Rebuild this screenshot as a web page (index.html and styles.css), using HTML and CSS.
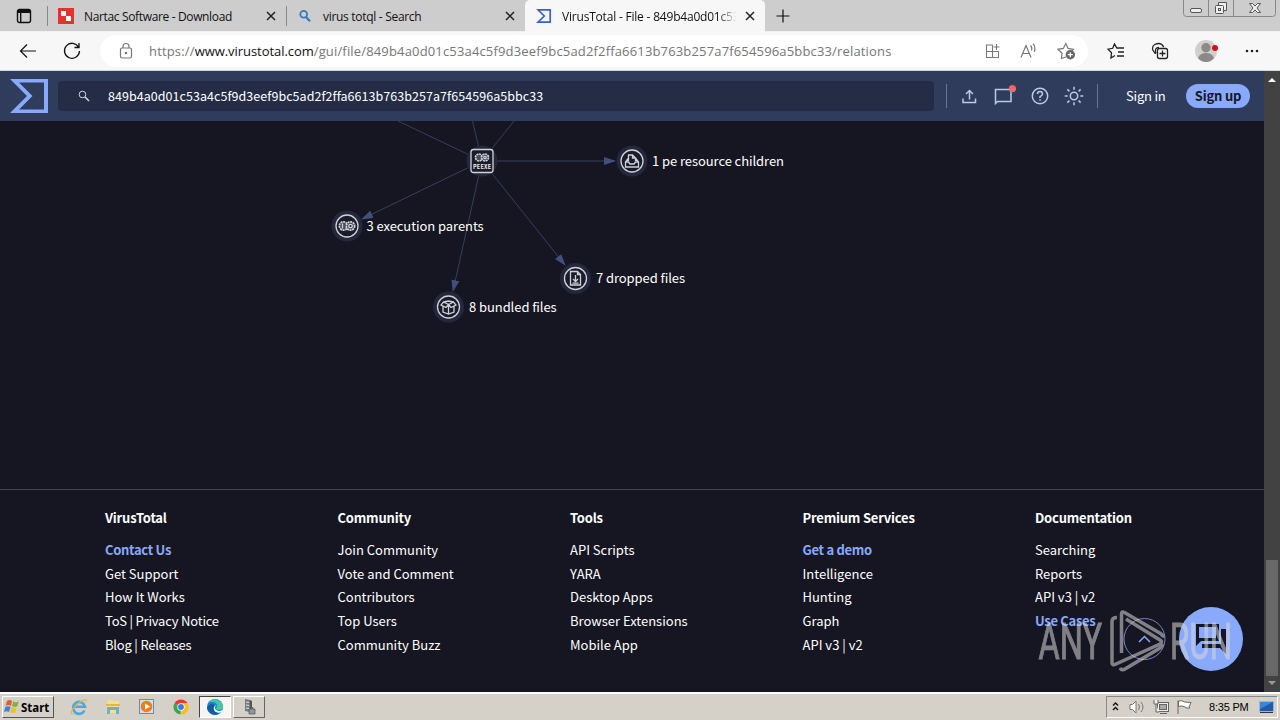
FILE: index.html
```html
<!DOCTYPE html>
<html lang="en">
<head>
    <meta charset="UTF-8">
    <meta name="viewport" content="width=device-width, initial-scale=1.0">
    <title>VirusTotal - File</title>
    <link rel="stylesheet" href="styles.css">
</head>
<body>
    <!-- Browser tabs -->
    <div class="tabs">
        <div class="tab-actions">
            <svg width="16" height="16" viewBox="0 0 16 16" fill="none" stroke="#111" stroke-width="1.4"><rect x="1.5" y="1.5" width="13" height="13" rx="2"/><path d="M1.5 3.5h13" stroke-width="3"/><path d="M4.7 4v10"/></svg>
        </div>
        <div class="tab tab-first">
            <svg class="favicon" width="16" height="16" viewBox="0 0 16 16"><path fill="#e5322d" d="M0 0h16v16H0z"/><path fill="#fff" d="M3 3h5v5H3zM8 8h5v5H8z"/></svg>
            <span class="tab-title">Nartac Software - Download</span>
            <svg class="close" width="10" height="10" viewBox="0 0 10 10"><path d="M1 1l8 8M9 1L1 9"/></svg>
        </div>
        <div class="tab tab-search">
            <svg class="favicon" width="16" height="16" viewBox="0 0 16 16" fill="none" stroke="#3478c4" stroke-width="1.8"><circle cx="6.7" cy="6.3" r="3.4"/><path d="M9 9l4 4.3" stroke-width="2.2"/></svg>
            <span class="tab-title">virus totql - Search</span>
            <svg class="close" width="10" height="10" viewBox="0 0 10 10"><path d="M1 1l8 8M9 1L1 9"/></svg>
        </div>
        <div class="tab tab-active">
            <svg class="favicon" width="16" height="16" viewBox="0 0 16 16"><path fill="none" stroke="#3b61c9" stroke-width="1.7" d="M2 1.8h12.2v12.4H2L8.3 8z"/></svg>
            <span class="tab-title tab-fade">VirusTotal - File - 849b4a0d01c53</span>
            <svg class="close" width="10" height="10" viewBox="0 0 10 10"><path d="M1 1l8 8M9 1L1 9"/></svg>
        </div>
        <svg class="new-tab" width="14" height="14" viewBox="0 0 14 14"><path d="M7 .5v13M.5 7h13" stroke="#111" stroke-width="1.2"/></svg>
        <svg class="window-buttons" width="94" height="18" viewBox="0 0 94 18" fill="none" stroke="#555">
            <path d="M.5 0v13.5q0 3 3 3h86q3 0 3-3V0M25.5 0v16M50.500 0v16" stroke="#888"/>
            <rect x="7.500" y="8.500" width="11" height="4" rx="1.500" fill="#eee"/>
            <path d="M35.500 5.500v-3h8v8h-3" fill="#eee"/><rect x="32.500" y="5.500" width="8" height="8" rx="1" fill="#eee"/><rect x="35.500" y="8.500" width="2" height="2"/>
            <path fill="#eee" d="M66.500 3.500h3l2.500 2.500 2.500-2.500h3L74 8l3.500 4.500h-3L72 10l-2.500 2.500h-3L70 8z"/>
        </svg>
    </div>

    <!-- Address bar -->
    <div class="toolbar">
        <svg class="back" width="18" height="16" viewBox="0 0 18 16" fill="none" stroke="#111" stroke-width="1.2"><path d="M17 8H1.500M8 1.500L1.500 8 8 14.500"/></svg>
        <svg class="reload" width="18" height="18" viewBox="0 0 18 18" fill="none" stroke="#111" stroke-width="1.3"><path d="M15.500 5A7.500 7.500 0 1 0 16.500 9M16 1v4.500h-4.500"/></svg>
        <div class="address">
            <svg class="lock" width="14" height="18" viewBox="0 0 14 18" fill="none" stroke="#777" stroke-width="1.200"><rect x="1.500" y="6" width="11" height="10" rx="1.500"/><path d="M4 6V4.500a3 3 0 0 1 6 0V6"/><circle cx="7" cy="11" r=".7" fill="#777"/></svg>
            <span class="url"><span class="scheme">https://</span><span class="host">www.virustotal.com</span><span class="path">/gui/file/849b4a0d01c53a4c5f9d3eef9bc5ad2f2ffa6613b763b257a7f654596a5bbc33/relations</span></span>
            <div class="address-icons">
                <svg width="16" height="16" viewBox="0 0 16 16" fill="none" stroke="#777" stroke-width="1.100"><path d="M7.500 2H1.500v12.500h12V8.500h-12M7.500 2v12.500M11.500 1v6M8.500 4h6"/></svg>
                <svg width="18" height="16" viewBox="0 0 18 16" fill="none" stroke="#777" stroke-width="1.200"><path d="M1 14.500L6 2.500l5 12M2.700 10.500h6.600M10.500 2.500q2 2 1 5M13 .7q3 3.500 1.300 8"/></svg>
                <svg width="18" height="18" viewBox="0 0 18 18"><path fill="none" stroke="#777" stroke-width="1.200" d="M9 15l-4.600 1.500.7-5.300L1 7.300l5.300-.9L8.800 1.500l2.400 4.900 5.300.9-2 2"/><circle cx="13.300" cy="12.700" r="4.700" fill="#666"/><path stroke="#fff" stroke-width="1.200" d="M10.800 12.700h5M13.300 10.200v5"/></svg>
            </div>
        </div>
        <div class="toolbar-icons">
            <svg width="18" height="18" viewBox="0 0 18 18" fill="none" stroke="#222" stroke-width="1.300"><path d="M8 13.500L4 16l.5-5.200L1 7.200l4.700-.9L7.500 2l2.300 4H17M11 10h6M10 14h7"/></svg>
            <svg width="18" height="18" viewBox="0 0 18 18" fill="none" stroke="#222" stroke-width="1.300"><path d="M4.500 12L1.800 8q-1-4 2-5.500 4-2 7 0l2 2.500"/><path d="M5 11.500Q3 5.500 8 5.500"/><rect x="6.500" y="6.500" width="10" height="10" rx="2"/><path d="M11.500 8.500v6M8.500 11.500h6"/></svg>
            <svg width="24" height="24" viewBox="0 0 24 24"><circle cx="11" cy="12" r="11" fill="#d2cecb"/><circle cx="11" cy="8.800" r="4.700" fill="#8b8a89"/><path fill="#8b8a89" d="M3 19q2-5 8-5t8 5q-3 4-8 4t-8-4z"/><circle cx="20" cy="9" r="3" fill="#d5111d"/></svg>
            <svg width="16" height="4" viewBox="0 0 16 4" fill="#222"><circle cx="2" cy="2" r="1.300"/><circle cx="7" cy="2" r="1.300"/><circle cx="12" cy="2" r="1.300"/></svg>
        </div>
    </div>

    <div class="viewport">
        <div class="page">
            <!-- Search header -->
            <header class="header">
                <svg class="logo" width="38" height="34" viewBox="0 0 38 34"><path fill="#88a9fc" fill-rule="evenodd" d="M17 17L0 34h38V0H0zM34 30.500H9L22.500 17 9 3.500h25z"/></svg>
                <div class="search">
                    <svg width="12" height="12" viewBox="0 0 12 12" fill="none" stroke="#ced5e5"><circle cx="4.500" cy="4.500" r="3.300"/><path d="M7 7l4 4" stroke-width="1.600"/></svg>
                    <span>849b4a0d01c53a4c5f9d3eef9bc5ad2f2ffa6613b763b257a7f654596a5bbc33</span>
                </div>
                <div class="header-icons">
                    <svg width="16" height="16" viewBox="0 0 16 16"><path d="M2 10.500v4h12.500v-4M8.500 11.500V2.500M5 6l3.500-3.500L12 6"/></svg>
                    <svg width="24" height="22" viewBox="0 0 24 22"><path d="M3.500 18.500V4.500h15.500v12H5.500z"/><circle class="badge" cx="20.500" cy="3.700" r="3.600"/></svg>
                    <svg width="18" height="18" viewBox="0 0 18 18"><circle cx="9" cy="9" r="7.700"/><path d="M6.500 7q0-2.500 2.500-2.500T11.500 7Q11.500 8.300 9 9.700v1.300M9 12.300v1.500"/></svg>
                    <svg width="20" height="20" viewBox="0 0 20 20"><circle cx="10" cy="10" r="3.700"/><path d="M10 .7v3M10 16.300v3M.7 10h3M16.300 10h3M3.400 3.400l2 2M14.600 14.600l2 2M16.600 3.400l-2 2M5.400 14.600l-2 2"/></svg>
                </div>
                <a class="sign-in">Sign in</a>
                <a class="sign-up">Sign up</a>
            </header>

            <!-- Relations graph -->
            <svg class="graph" width="1264" height="368" viewBox="0 121 1264 368">
                <defs>
                    <marker id="arrow" viewBox="0 0 12 8" refX="11" refY="4" markerWidth="12" markerHeight="8" markerUnits="userSpaceOnUse" orient="auto"><path fill="#414f7c" d="M0 0l12 4-12 4z"/></marker>
                </defs>
                <g class="edges">
                    <path d="M482 161L398 121M482 161L472.500 121M482 161L514 121"/>
                    <path marker-end="url(#arrow)" d="M482 161H615"/>
                    <path marker-end="url(#arrow)" d="M482 161L362 219"/>
                    <path marker-end="url(#arrow)" d="M482 161L453 291"/>
                    <path marker-end="url(#arrow)" d="M482 161L565 265"/>
                </g>
                <g class="node" transform="translate(482 161)">
                    <circle class="halo" r="15.500"/>
                    <rect x="-11" y="-11.500" width="22" height="23" rx="2.500"/>
                    <circle class="gear" cx="-3" cy="-3.500" r="3.500"/><circle class="gear" cx="3" cy="-3.500" r="3.500"/><circle cx="3" cy="-3.500" r="1.200"/>
                    <text class="type" x="-9" y="7.500">PEEXE</text>
                </g>
                <g class="node" transform="translate(632 161)">
                    <circle class="halo" r="15.500"/><circle r="11"/>
                    <path d="M-3.500 0v-6h4l3 3v3M.5-6v3h3M-3.500-3L-6.500 1v5h13V1l-3-4M-6.500 1h3l1.500 2h4l1.500-2h3"/>
                </g>
                <g class="node" transform="translate(347 226)">
                    <circle class="halo" r="15.500"/><circle r="11"/>
                    <circle class="gear" cx="-3.500" r="4.200"/><circle class="gear" cx="3.500" r="4.200"/><circle cx="3.500" r="1.700"/><path d="M-4.500-2.500v5"/>
                </g>
                <g class="node" transform="translate(448.500 307)">
                    <circle class="halo" r="15.500"/><circle r="11"/>
                    <path d="M0-2.500L-5-5l-2.500 3L-2.500.5 0-2.500 2.500.5l5-2.500L5-5zM-5.500-1v6L0 7l5.500-2v-6M0-2V7M-5-5L0-6l5 1"/>
                </g>
                <g class="node" transform="translate(575.500 278.500)">
                    <circle class="halo" r="15.500"/><circle r="11"/>
                    <path d="M-5-7h7l3 3V6.500H-5zM2-7v3h3M0-3.500V3M-2.500.5L0 3 2.500.5M-3 4.700h6"/>
                </g>
                <g class="labels">
                    <text x="652" y="166">1 pe resource children</text>
                    <text x="366.500" y="231">3 execution parents</text>
                    <text x="469" y="312">8 bundled files</text>
                    <text x="596" y="283">7 dropped files</text>
                </g>
            </svg>

            <footer class="footer">
                <div class="column">
                    <h4>VirusTotal</h4>
                    <a class="highlight">Contact Us</a>
                    <a>Get Support</a>
                    <a>How It Works</a>
                    <a class="tight">ToS | Privacy Notice</a>
                    <a class="tight">Blog | Releases</a>
                </div>
                <div class="column">
                    <h4>Community</h4>
                    <a>Join Community</a>
                    <a>Vote and Comment</a>
                    <a>Contributors</a>
                    <a>Top Users</a>
                    <a>Community Buzz</a>
                </div>
                <div class="column">
                    <h4>Tools</h4>
                    <a>API Scripts</a>
                    <a>YARA</a>
                    <a>Desktop Apps</a>
                    <a>Browser Extensions</a>
                    <a>Mobile App</a>
                </div>
                <div class="column">
                    <h4>Premium Services</h4>
                    <a class="highlight">Get a demo</a>
                    <a>Intelligence</a>
                    <a>Hunting</a>
                    <a>Graph</a>
                    <a>API v3 | v2</a>
                </div>
                <div class="column">
                    <h4>Documentation</h4>
                    <a>Searching</a>
                    <a>Reports</a>
                    <a>API v3 | v2</a>
                    <a class="highlight">Use Cases</a>
                </div>
            </footer>

            <!-- Floating buttons and watermark -->
            <svg class="floating" width="230" height="80" viewBox="1030 600 230 80">
                <circle cx="1144.500" cy="639" r="20.500" fill="none" stroke="#7086c9"/>
                <path d="M1139 642l5.500-5.500 5.500 5.500" fill="none" stroke="#8aa6f5" stroke-width="1.500"/>
                <circle cx="1211" cy="639" r="32" fill="#88a9fc"/>
                <path fill="#161622" d="M1196 624h23v17h-18l-5 5zM1221 629h5v25l-6-6h-18v-4h19z"/>
                <path fill="#88a9fc" d="M1199 627h17v11h-17z"/>
                <g class="watermark">
                    <text transform="translate(1038.500 659) scale(.65 1)">ANY</text>
                    <text transform="translate(1170 659) scale(.63 1)">RUN</text>
                    <path d="M1117 617.500q-5 0-5 4V663q0 3 4 1l44-20q3-2 0-4l-34-21M1121.500 653v-39q0-3 3-1.500l36 21q3 2 2 4M1120 668q2 3 5 1l35-21q2-2 2-4"/>
                </g>
            </svg>
        </div>

        <div class="scrollbar">
            <svg width="16" height="16" viewBox="0 0 16 16"><path fill="#fff" d="M4 11l4-4 4 4z"/></svg>
            <div class="thumb"></div>
            <svg width="16" height="16" viewBox="0 0 16 16"><path fill="#999" d="M4 5l4 4 4-4z"/></svg>
        </div>
    </div>

    <!-- Taskbar -->
    <div class="taskbar">
        <div class="start">
            <svg width="16" height="16" viewBox="0 0 16 16"><path fill="#e65a2b" d="M3 2q3-2 5 0L7 7Q4 5 1.500 7z"/><path fill="#74b843" d="M9 2.500q3 1.500 6 0l-2 5q-3 1-5-.5z"/><path fill="#3b84d0" d="M1.300 8q3-1.500 5.200 0L5 13q-2-1.500-5 0z"/><path fill="#f4bd2e" d="M7.500 8q3 1.500 5.300.5l-1.600 5q-3 1-5.200-.5z"/></svg>
            <span>Start</span>
        </div>
        <div class="quick-launch">
            <div class="app"><svg width="18" height="18" viewBox="0 0 18 18" fill="none"><path d="M14.500 12.500A6 6 0 1 1 15 8.800H4" stroke="#42ace3" stroke-width="2.600"/><path d="M3 15.500q-3 1-1-3Q6 6 12 3q5-2.500 4.500.5" stroke="#e8b73a" stroke-width="1.300"/></svg></div>
            <div class="app"><svg width="18" height="18" viewBox="0 0 18 18"><path fill="#f3df91" d="M3 4l1-2h4l1 1h6v12H2z"/><path fill="#dcb750" d="M2 6h14v2H2z"/><path fill="#63b2d7" d="M3 9h12v7h-3v-4H6v4H3z"/></svg></div>
            <div class="app"><svg width="18" height="18" viewBox="0 0 18 18"><rect x="1.500" y="1.500" width="14" height="14" fill="#cce1f3" stroke="#5791c7"/><circle cx="8.500" cy="8.500" r="5.800" fill="#f07d15"/><path fill="#fff" d="M7 5.500l5 3-5 3z"/></svg></div>
            <div class="app"><svg width="18" height="18" viewBox="0 0 18 18"><path fill="#e33b2e" d="M9 9L2.500 5.200A7.500 7.500 0 0 1 15.500 5.200L9 5z"/><path fill="#34a853" d="M9 9l-.5 7.500A7.500 7.500 0 0 1 2.500 5.200z"/><path fill="#fbc116" d="M9 5h6.400A7.500 7.500 0 0 1 8.500 16.500L12 9z"/><circle cx="9" cy="9" r="3.700" fill="#fff"/><circle cx="9" cy="9" r="2.900" fill="#3978e8"/></svg></div>
        </div>
        <div class="task pressed"><svg width="18" height="18" viewBox="0 0 18 18"><circle cx="9" cy="9" r="8" fill="#1687c9"/><path fill="#43c7a6" d="M3 4a8 8 0 0 1 14 5q0 3-4 3-2 0-3-1 3-6-3-7z"/><path fill="#125d9e" d="M1 9q3-5 8-2-3 5 1 7 3 1 5 0-7 6-12 0Q1 12 1 9z"/><path fill="#fff" d="M10 7q-2 3 0 5 3 2 7 0l-1 2q-6 2-8-2-1-3 2-5z"/></svg></div>
        <div class="task"><svg width="16" height="18" viewBox="0 0 16 18"><path fill="#747b7e" d="M4 1l5 1v12l-5-1z"/><path stroke="#e4e7e8" d="M5 4l3 .5M5 7l3 .5M5 10l3 .5"/><path fill="#4d5356" d="M9 2l2 1v10l-2 1z"/><path fill="#919799" stroke="#4d5356" stroke-width=".7" d="M8 11h6v5H8zM10 11V9.500h2V11"/></svg></div>
        <div class="tray">
            <svg width="10" height="12" viewBox="0 0 10 12" fill="none" stroke="#111" stroke-width="1.400"><path d="M2 4.500l2.500-2.500 2.500 2.500M2 9l2.500-2.500L7 9"/></svg>
            <svg width="18" height="16" viewBox="0 0 18 16" fill="#fff" stroke="#777"><path d="M2 5.500h2.500L8 2v12L4.500 10.500H2z"/><path fill="none" d="M10.500 5q2 3 0 6M13 3q4 5 0 10"/></svg>
            <svg width="16" height="16" viewBox="0 0 16 16" fill="#eee" stroke="#666"><rect x="4.500" y="3.500" width="11" height="9"/><rect x="6.500" y="5.500" width="7" height="5" fill="#aaa"/><path d="M1 1v4h4V1M3 5v8h3M7 14.500h7"/></svg>
            <svg width="17" height="16" viewBox="0 0 17 16" fill="#fff" stroke="#666"><path d="M2 1.500V15M2.500 2q3-1 6 1l6.500.5-2 4.500 1 1q-3 1-6-1.500-3-1-5.500 0z"/></svg>
            <span class="clock">8:35 PM</span>
            <svg width="15" height="13" viewBox="0 0 15 13"><path fill="#205baa" stroke="#9bb6d1" d="M.5.5h14v10H.5z"/><path fill="#3d86d5" d="M1 1h13L1 8z"/><path fill="#333" d="M1 11h13v1H1z"/></svg>
        </div>
    </div>
</body>
</html>
```
FILE: styles.css
```css
* {
    box-sizing: border-box;
}
body {
    margin: 0;
    height: 720px;
    display: flex;
    flex-direction: column;
    overflow: hidden;
    font-family: "Noto Sans CJK SC", "Noto Sans", sans-serif;
    background-color: #161622;
}
svg {
    display: block;
    flex: none;
}

/* Tabs */
.tabs {
    height: 32px;
    flex: none;
    display: flex;
    background-color: #cdcdcd;
    border-bottom: 1px solid #f0f0f0;
    font-family: "Open Sans", sans-serif;
    font-size: 12px;
    color: #111;
}
.tab-actions {
    width: 47px;
    padding: 8px 0 0 16px;
}
.tab {
    display: flex;
    align-items: center;
    height: 32px;
    padding: 0 10px;
}
.tab-first {
    width: 239px;
    padding-left: 11px;
    background: linear-gradient(#888, #888) 0 6px / 1px 20px no-repeat;
}
.tab-search {
    width: 239px;
    padding-left: 11px;
    background: linear-gradient(#888, #888) 0 6px / 1px 20px no-repeat;
}
.tab-active {
    width: 240px;
    padding-left: 11px;
    background-color: #f7f7f7;
    border-radius: 5px 5px 0 0;
}
.tab-title {
    margin-left: 10px;
    flex: 1;
    white-space: nowrap;
}
.tab-first .tab-title {
    letter-spacing: -0.35px;
}
.tab-search .tab-title {
    letter-spacing: -0.3px;
}
.tab-fade {
    letter-spacing: -0.2px;
    -webkit-mask-image: linear-gradient(90deg, #000 155px, transparent 175px);
}
.close {
    stroke: #222;
    stroke-width: 1.5;
}
.new-tab {
    margin: 9px 0 0 11px;
}
.window-buttons {
    margin-left: auto;
    margin-right: 3px;
}

/* Address bar */
.toolbar {
    height: 39px;
    flex: none;
    display: flex;
    align-items: center;
    background-color: #f7f7f7;
    border-bottom: 1px solid #ccd8e8;
}
.back {
    margin-left: 19px;
}
.reload {
    margin-left: 26px;
}
.address {
    width: 988px;
    height: 32px;
    margin-left: 19px;
    padding: 0 13px 0 19px;
    display: flex;
    align-items: center;
    border-radius: 16px;
    background-color: #fff;
}
.url {
    margin-left: 16px;
    font-family: "Open Sans", sans-serif;
    font-size: 13px;
    letter-spacing: 0.16px;
    white-space: nowrap;
    color: #767676;
}
.host {
    color: #111;
    letter-spacing: -0.05px;
}
.address-icons {
    margin-left: auto;
    display: flex;
    align-items: center;
    gap: 19px;
}
.toolbar-icons {
    margin-left: 19px;
    display: flex;
    align-items: center;
    gap: 26px;
}

/* Page */
.viewport {
    height: 621px;
    flex: none;
    display: flex;
}
.page {
    position: relative;
    width: 1264px;
}
.header {
    height: 50px;
    display: flex;
    align-items: center;
    padding-left: 10px;
    background-color: #2f3c5c;
    color: #fff;
    font-size: 13px;
}
.search {
    width: 876px;
    height: 30px;
    margin-left: 10px;
    padding: 0 0 1px 20px;
    display: flex;
    align-items: center;
    gap: 18px;
    border-radius: 4px;
    background-color: #252c46;
    font-size: 12.5px;
    letter-spacing: 0.05px;
}
.header-icons {
    width: 152px;
    height: 24px;
    margin-left: 12px;
    padding-left: 14px;
    display: flex;
    align-items: center;
    gap: 15px;
    border-left: 1px solid #66769c;
    border-right: 1px solid #66769c;
}
.header-icons path, .header-icons circle {
    fill: none;
    stroke: #b9c9e9;
    stroke-width: 1.5;
}
.header-icons .badge {
    fill: #fa656d;
    stroke: none;
}
.sign-in {
    width: 39px;
    margin-left: 28px;
    padding-bottom: 1px;
    letter-spacing: -0.2px;
    white-space: nowrap;
}
.sign-up {
    width: 64px;
    height: 24px;
    margin-left: 21px;
    line-height: 24px;
    text-align: center;
    letter-spacing: -0.2px;
    border-radius: 12px;
    background-color: #88a9fc;
    color: #161622;
    font-weight: bold;
}

/* Graph */
.edges path {
    fill: none;
    stroke: #373f5c;
}
.node {
    fill: none;
    stroke: #d0d1d9;
    stroke-width: 1.3;
}
.node rect, .node circle {
    fill: #1b1c2a;
}
.node .gear {
    fill: #4a4b58;
    stroke-width: 1.7;
    stroke-dasharray: 2 0.7;
}
.node .halo {
    fill: #23283d;
    stroke: none;
}
.node .type {
    font-size: 5.5px;
    font-weight: bold;
    letter-spacing: 0.2px;
    fill: #eee;
    stroke: none;
}
.labels {
    font-size: 13px;
    letter-spacing: -0.07px;
    fill: #fff;
}

/* Footer */
.footer {
    height: 203px;
    padding: 16px 0 0 105px;
    display: grid;
    grid-template-columns: repeat(5, 232.5px);
    border-top: 1px solid #42434f;
    color: #fff;
    font-size: 13px;
}
.column {
    display: flex;
    flex-direction: column;
    line-height: 23.7px;
}
.column h4 {
    margin: 0 0 8px;
    font-size: 13px;
    line-height: 24px;
    letter-spacing: -0.2px;
}
.column .highlight {
    color: #88a9fc;
    font-weight: bold;
    letter-spacing: -0.3px;
}
.column .tight {
    letter-spacing: -0.2px;
}
.floating {
    position: absolute;
    left: 1030px;
    top: 529px;
}
.watermark {
    opacity: 0.55;
    fill: none;
    stroke: #d8d8d8;
    stroke-width: 3.5;
}
.watermark text {
    font-family: Roboto, sans-serif;
    font-size: 50px;
    fill: #d8d8d8;
    stroke-width: 1;
}

/* Scrollbar */
.scrollbar {
    width: 16px;
    display: flex;
    flex-direction: column;
    background-color: #424242;
}
.thumb {
    width: 12px;
    height: 116px;
    margin: auto 2px 0;
    background-color: #686868;
}

/* Taskbar */
.taskbar {
    height: 28px;
    flex: none;
    display: flex;
    align-items: center;
    border-top: 2px solid #fff;
    padding: 0 2px;
    background-color: #d5d0c8;
}
.start {
    width: 52px;
    height: 22px;
    display: flex;
    align-items: center;
    gap: 1px;
    padding-left: 1px;
    border: 1px solid #fff;
    border-right-color: #555;
    border-bottom-color: #555;
    font: bold 11.5px "Noto Sans", sans-serif;
}
.quick-launch {
    width: 145px;
    display: flex;
    gap: 16px;
    padding-left: 16px;
}
.task {
    width: 32px;
    height: 22px;
    margin-right: 2px;
    display: flex;
    align-items: center;
    justify-content: center;
    border: 1px solid #fff;
    border-right-color: #666;
    border-bottom-color: #666;
}
.pressed {
    border-color: #444 #fff #fff #444;
    background-color: #f6f5f3;
}
.tray {
    width: 172px;
    height: 22px;
    margin-left: auto;
    padding-left: 4px;
    display: flex;
    align-items: center;
    gap: 7px;
    border: 1px solid #888;
    border-right-color: #fff;
    border-bottom-color: #fff;
}
.clock {
    width: 43px;
    margin-left: 9px;
    font: 11px "Liberation Sans", sans-serif;
    letter-spacing: -0.2px;
    white-space: nowrap;
}
```
